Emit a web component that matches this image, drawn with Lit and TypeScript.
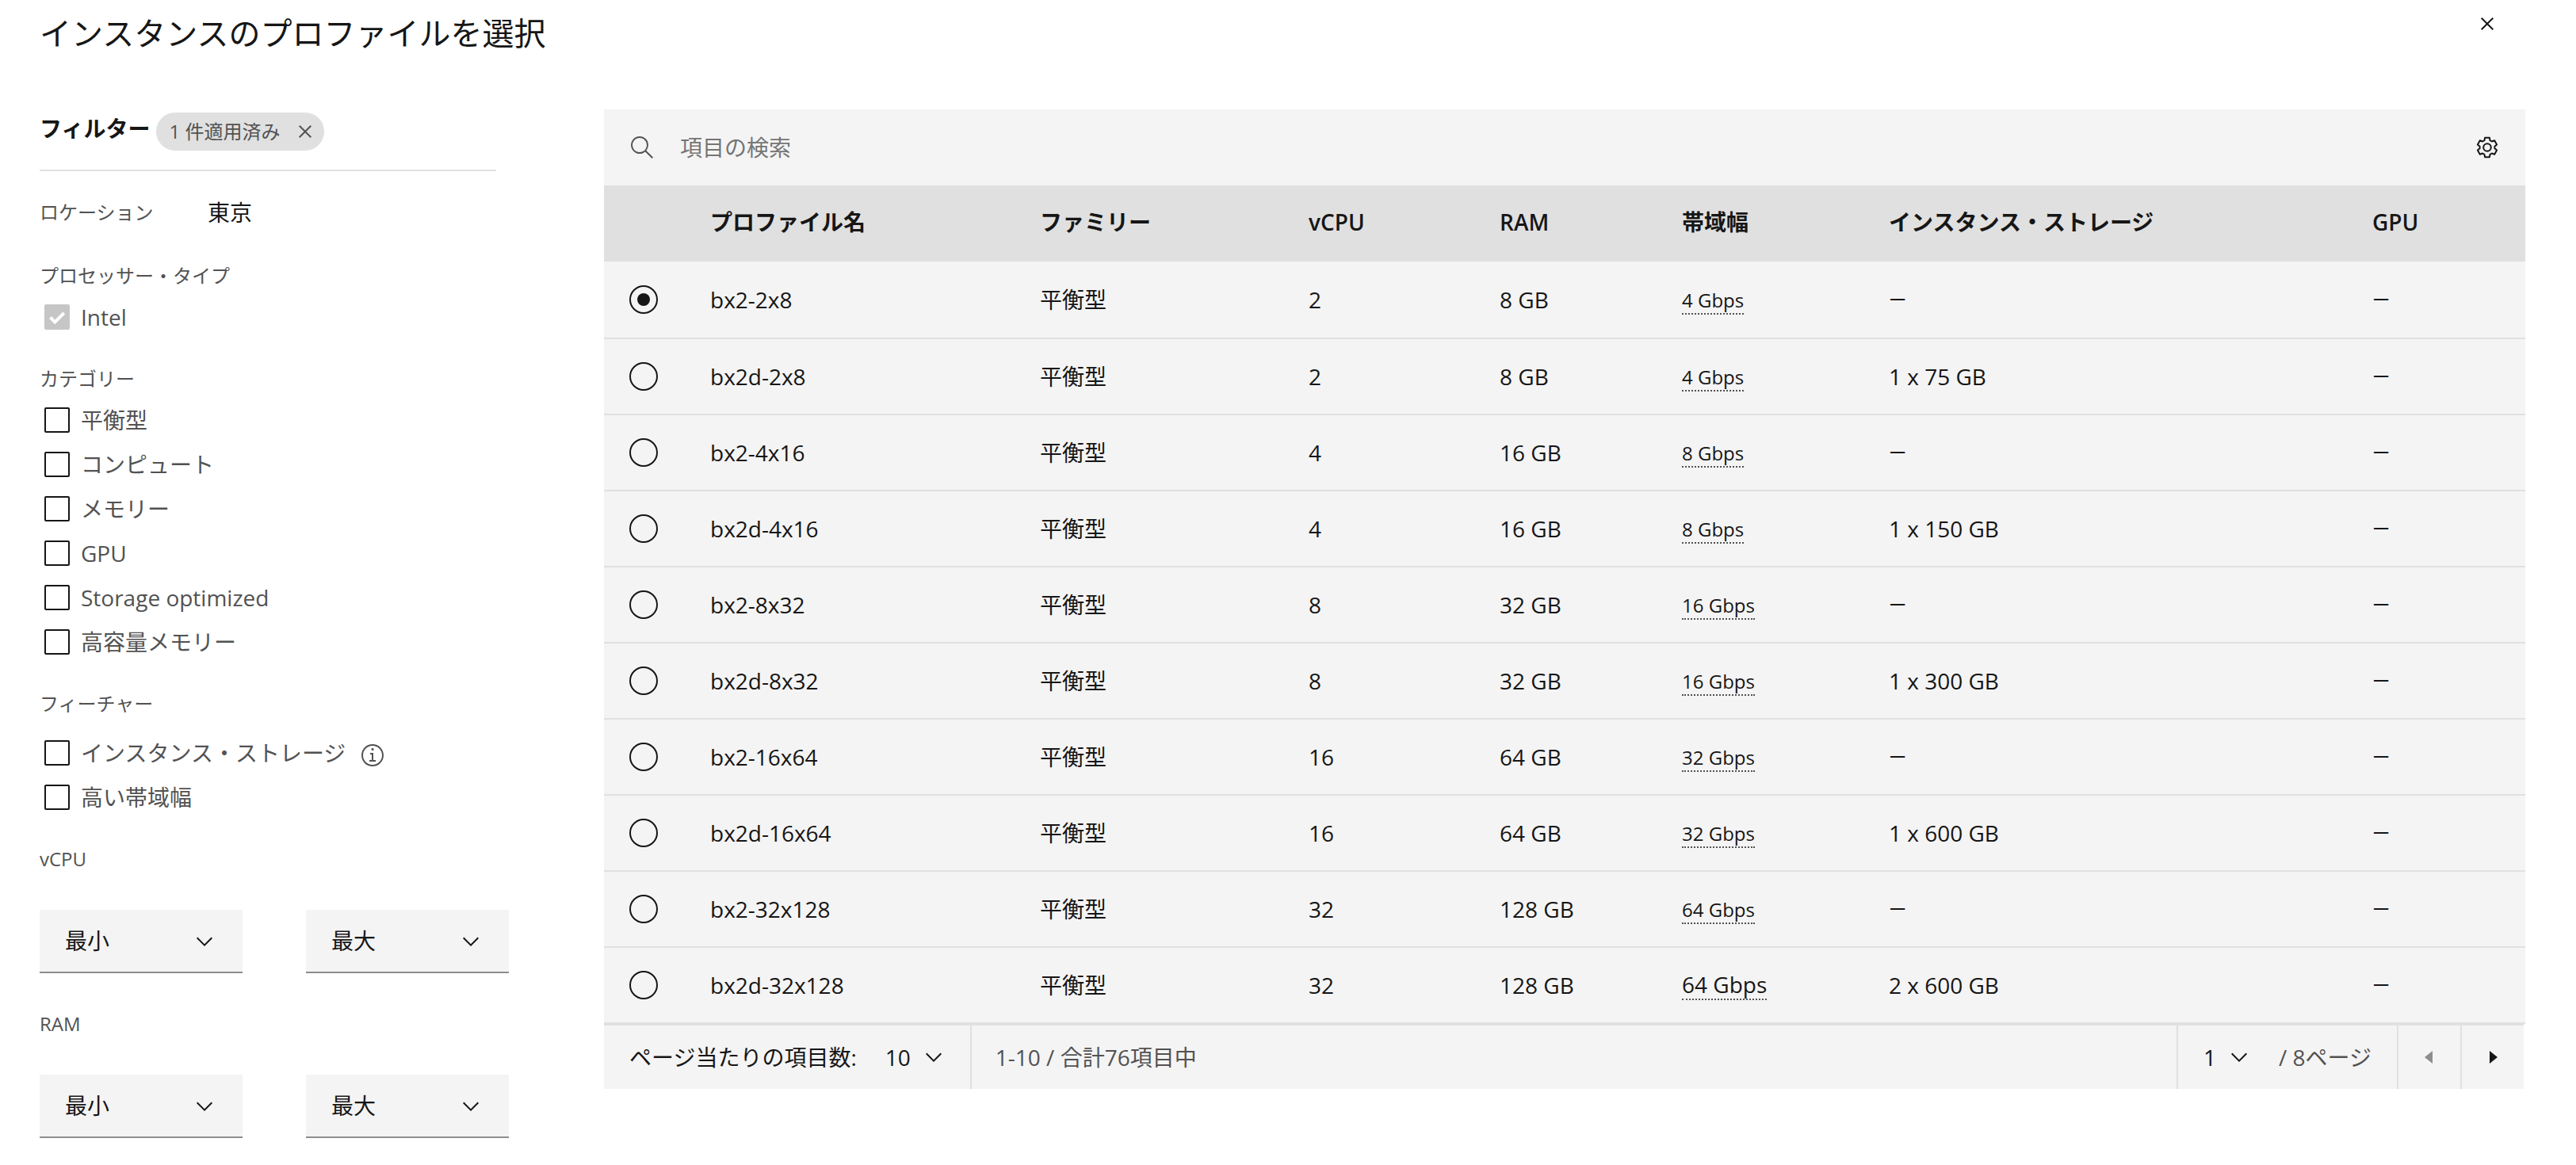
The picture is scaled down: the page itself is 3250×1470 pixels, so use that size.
import { LitElement, html, css, svg, nothing } from "lit";
import { customElement, property, state } from "lit/decorators.js";

type Profile = {
  name: string;
  family: string;
  vcpu: number;
  ram: string;
  bandwidth: string;
  storage: string | null;
  gpu: string | null;
};

const profile = (
  name: string,
  vcpu: number,
  ram: string,
  bandwidth: string,
  storage: string | null = null
): Profile => ({ name, family: "平衡型", vcpu, ram, bandwidth, storage, gpu: null });

const PROFILES: Profile[] = [
  profile("bx2-2x8", 2, "8 GB", "4 Gbps"),
  profile("bx2d-2x8", 2, "8 GB", "4 Gbps", "1 x 75 GB"),
  profile("bx2-4x16", 4, "16 GB", "8 Gbps"),
  profile("bx2d-4x16", 4, "16 GB", "8 Gbps", "1 x 150 GB"),
  profile("bx2-8x32", 8, "32 GB", "16 Gbps"),
  profile("bx2d-8x32", 8, "32 GB", "16 Gbps", "1 x 300 GB"),
  profile("bx2-16x64", 16, "64 GB", "32 Gbps"),
  profile("bx2d-16x64", 16, "64 GB", "32 Gbps", "1 x 600 GB"),
  profile("bx2-32x128", 32, "128 GB", "64 Gbps"),
  profile("bx2d-32x128", 32, "128 GB", "64 Gbps", "2 x 600 GB"),
];

const COLUMNS = ["プロファイル名", "ファミリー", "vCPU", "RAM", "帯域幅", "インスタンス・ストレージ", "GPU"];

const ICONS = {
  close: svg`<path d="M12 4.7 11.3 4 8 7.3 4.7 4 4 4.7 7.3 8 4 11.3 4.7 12 8 8.7 11.3 12 12 11.3 8.7 8z"/>`,
  search: svg`<path d="M15 14.3 10.7 10c1.9-2.3 1.6-5.8-.7-7.7S4.2.7 2.3 3 .7 8.8 3 10.7c2 1.7 5 1.7 7 0l4.3 4.3.7-.7zM2 6.5C2 4 4 2 6.5 2S11 4 11 6.5 9 11 6.5 11 2 9 2 6.5z"/>`,
  settings: svg`<g transform="translate(8 8) scale(.5)" fill="none" stroke="currentColor" stroke-width="2" stroke-linejoin="round"><path d="M-2.9-12.3H2.9L3.6-8.8 5.9-7.5 9.2-8.7 12.1-3.6 9.4-1.3V1.3L12.1 3.6 9.2 8.7 5.9 7.5 3.6 8.8 2.9 12.3H-2.9L-3.6 8.8-5.9 7.5-9.2 8.7-12.1 3.6-9.4 1.3V-1.3L-12.1-3.6-9.2-8.7-5.9-7.5-3.6-8.8Z"/><circle r="4.8"/></g>`,
  chevron: svg`<path d="M8 11 3 6l.7-.7L8 9.6l4.3-4.3.7.7z"/>`,
  caretLeft: svg`<path d="M10 12 5 8l5-4z"/>`,
  caretRight: svg`<path d="M6 4l5 4-5 4z"/>`,
  info: svg`<path d="M8.5 11V6.5h-2v1h1V11H6v1h4v-1zM8 3.5c-.4 0-.8.3-.8.8S7.6 5 8 5s.8-.3.8-.8-.4-.7-.8-.7z"/><path d="M8 15c-3.9 0-7-3.1-7-7s3.1-7 7-7 7 3.1 7 7-3.1 7-7 7zM8 2C4.7 2 2 4.7 2 8s2.7 6 6 6 6-2.7 6-6-2.7-6-6-6z"/>`,
};

const icon = (name: keyof typeof ICONS) =>
  html`<svg class="icon" viewBox="0 0 16 16" aria-hidden="true">${ICONS[name]}</svg>`;

const base = css`
  *,
  *::before,
  *::after {
    box-sizing: border-box;
  }
  button,
  input,
  select {
    margin: 0;
    padding: 0;
    border: 0;
    border-radius: 0;
    background: none;
    color: inherit;
    font: inherit;
    appearance: none;
  }
  button,
  select {
    cursor: pointer;
  }
  .icon {
    display: block;
    flex: none;
    width: 32px;
    height: 32px;
    fill: currentColor;
  }
`;

@customElement("filter-checkbox")
export class FilterCheckbox extends LitElement {
  @property() label = "";
  @property({ type: Boolean }) checked = false;
  @property({ type: Boolean }) disabled = false;
  @property({ type: Boolean }) info = false;

  static styles = [
    base,
    css`
      :host {
        display: flex;
        align-items: center;
        height: 56px;
        padding-left: 6px;
        color: #525252;
      }
      .option {
        display: flex;
        align-items: center;
        gap: 14px;
      }
      .mark {
        display: grid;
      }
      .box,
      .tick {
        grid-area: 1 / 1;
        width: 32px;
        height: 32px;
      }
      .box {
        border: 2px solid #161616;
        border-radius: 2px;
      }
      .box:checked {
        background: #161616;
      }
      .box:disabled {
        border-color: #c6c6c6;
        background: #c6c6c6;
      }
      .tick {
        fill: none;
        stroke: #ffffff;
        stroke-width: 4;
        pointer-events: none;
      }
      .info {
        margin: 6px 0 0 18px;
      }
    `,
  ];

  render() {
    return html`
      <label class="option">
        <span class="mark">
          <input
            class="box"
            type="checkbox"
            .checked=${this.checked}
            ?disabled=${this.disabled}
            @change=${(e: Event) => (this.checked = (e.target as HTMLInputElement).checked)}
          />
          ${this.checked
            ? html`<svg class="tick" viewBox="0 0 32 32" aria-hidden="true"><path d="M7.5 16.5l5.8 5.8L24.8 10.8" /></svg>`
            : nothing}
        </span>
        <span>${this.label}</span>
      </label>
      ${this.info ? html`<button class="info" type="button" aria-label="詳細">${icon("info")}</button>` : nothing}
    `;
  }
}

@customElement("range-select")
export class RangeSelect extends LitElement {
  @property() label = "";
  @property() placeholder = "";

  static styles = [
    base,
    css`
      :host {
        display: grid;
        align-items: center;
        color: #161616;
      }
      .field,
      .icon {
        grid-area: 1 / 1;
      }
      .field {
        width: 100%;
        height: 80px;
        padding: 0 80px 0 32px;
        border-bottom: 2px solid #8d8d8d;
        background: #f4f4f4;
      }
      .icon {
        justify-self: end;
        margin-right: 32px;
        pointer-events: none;
      }
    `,
  ];

  render() {
    return html`
      <select class="field" aria-label=${this.label}>
        <option>${this.placeholder}</option>
      </select>
      ${icon("chevron")}
    `;
  }
}

@customElement("filter-panel")
export class FilterPanel extends LitElement {
  static styles = [
    base,
    css`
      :host {
        display: block;
        color: #525252;
      }
      .head {
        display: flex;
        align-items: center;
        gap: 8px;
        margin-right: 16px;
        padding: 4px 0 24px;
        border-bottom: 2px solid #e0e0e0;
      }
      .heading {
        margin: 0;
        padding-bottom: 8px;
        color: #161616;
        font-size: 28px;
        line-height: 36px;
        font-weight: 600;
      }
      .tag {
        display: flex;
        align-items: center;
        gap: 16px;
        height: 48px;
        padding: 0 8px 0 16px;
        border-radius: 24px;
        background: #e0e0e0;
        font-size: 24px;
      }
      .location {
        display: grid;
        grid-template-columns: 212px 1fr;
        align-items: center;
        margin: 32px 0 44px;
        line-height: 40px;
      }
      .place {
        color: #161616;
      }
      .title {
        font-size: 24px;
        line-height: 32px;
      }
      .group {
        display: grid;
        margin: 0 0 34px;
        padding: 0;
        border: 0;
      }
      .group .title {
        margin-bottom: 8px;
        padding: 0;
      }
      .group.features .title {
        margin-bottom: 18px;
      }
      .range {
        display: grid;
        grid-template-columns: 1fr 1fr;
        gap: 48px 80px;
        margin-bottom: 48px;
      }
      .range .title {
        grid-column: 1 / -1;
      }
    `,
  ];

  render() {
    const categories = ["平衡型", "コンピュート", "メモリー", "GPU", "Storage optimized", "高容量メモリー"];
    return html`
      <div class="head">
        <h2 class="heading">フィルター</h2>
        <span class="tag">
          1 件適用済み
          <button type="button" aria-label="フィルターをクリア">${icon("close")}</button>
        </span>
      </div>
      <div class="location"><span class="title">ロケーション</span><span class="place">東京</span></div>
      <fieldset class="group">
        <legend class="title">プロセッサー・タイプ</legend>
        <filter-checkbox label="Intel" checked disabled></filter-checkbox>
      </fieldset>
      <fieldset class="group">
        <legend class="title">カテゴリー</legend>
        ${categories.map((c) => html`<filter-checkbox label=${c}></filter-checkbox>`)}
      </fieldset>
      <fieldset class="group features">
        <legend class="title">フィーチャー</legend>
        <filter-checkbox label="インスタンス・ストレージ" info></filter-checkbox>
        <filter-checkbox label="高い帯域幅"></filter-checkbox>
      </fieldset>
      ${["vCPU", "RAM"].map(
        (r) => html`
          <div class="range" role="group" aria-label=${r}>
            <span class="title">${r}</span>
            <range-select label="${r} 最小" placeholder="最小"></range-select>
            <range-select label="${r} 最大" placeholder="最大"></range-select>
          </div>
        `
      )}
    `;
  }
}

@customElement("profile-table")
export class ProfileTable extends LitElement {
  @state() private selected = 0;

  static styles = [
    base,
    css`
      :host {
        display: block;
        color: #161616;
      }
      .toolbar {
        display: flex;
        align-items: center;
        height: 96px;
        padding: 0 32px;
        background: #f4f4f4;
      }
      .search {
        display: flex;
        flex: 1;
        align-items: center;
        gap: 32px;
        color: #525252;
      }
      .query {
        flex: 1;
        outline: none;
      }
      .query::placeholder {
        color: #757575;
        opacity: 1;
      }
      .table {
        width: 100%;
        border-spacing: 0;
        table-layout: fixed;
        background: #f4f4f4;
      }
      .c0 { width: 102px; }
      .c1 { width: 416px; }
      .c2 { width: 339px; }
      .c3 { width: 241px; }
      .c4 { width: 230px; }
      .c5 { width: 261px; }
      .c6 { width: 610px; }
      .c7 { width: 225px; }
      .th {
        height: 96px;
        padding: 0 0 4px 32px;
        background: #e0e0e0;
        font-weight: 600;
        text-align: left;
      }
      .td {
        height: 96px;
        padding: 0 0 0 32px;
        border-bottom: 2px solid #e0e0e0;
      }
      .row:first-child .td {
        height: 98px;
      }
      .radio {
        display: grid;
        place-items: center;
        width: 36px;
        height: 36px;
        border: 2px solid #161616;
        border-radius: 50%;
      }
      .radio:checked::before {
        width: 16px;
        height: 16px;
        border-radius: 50%;
        background: #161616;
        content: "";
      }
      .none {
        font-family: Roboto, sans-serif;
      }
      .speed {
        display: inline-block;
        border-bottom: 2px dotted #525252;
        font-size: 24px;
        line-height: 32px;
      }
      .row:last-child .speed {
        font-size: 28px;
        line-height: 36px;
      }
      .pager {
        display: flex;
        margin-right: 2px;
        border-top: 2px solid #e0e0e0;
        background: #f4f4f4;
        line-height: 80px;
      }
      .size,
      .page {
        display: flex;
        align-items: center;
      }
      .size {
        padding: 0 30px 0 32px;
        border-right: 2px solid #e0e0e0;
      }
      .range {
        flex: 1;
        padding-left: 30px;
        color: #525252;
      }
      .page {
        padding: 0 32px;
        border-left: 2px solid #e0e0e0;
        color: #525252;
      }
      .pick {
        display: grid;
        align-items: center;
        color: #161616;
      }
      .pick > * {
        grid-area: 1 / 1;
      }
      .pick .icon {
        justify-self: end;
        pointer-events: none;
      }
      .pick .field {
        height: 80px;
        padding-right: 44px;
      }
      .size .pick {
        margin-left: 36px;
      }
      .page .pick {
        margin-right: 34px;
      }
      .step {
        display: grid;
        place-items: center;
        width: 80px;
        border-left: 2px solid #e0e0e0;
      }
      .step:disabled {
        color: #8d8d8d;
        cursor: default;
      }
    `,
  ];

  private optional(value: string | null) {
    return value ?? html`<span class="none">—</span>`;
  }

  render() {
    return html`
      <div class="toolbar">
        <label class="search">
          ${icon("search")}
          <input class="query" type="text" placeholder="項目の検索" aria-label="項目の検索" />
        </label>
        <button type="button" aria-label="設定">${icon("settings")}</button>
      </div>
      <table class="table">
        <colgroup>
          ${[0, 1, 2, 3, 4, 5, 6, 7].map((i) => html`<col class="c${i}" />`)}
        </colgroup>
        <thead>
          <tr>
            <td class="th"></td>
            ${COLUMNS.map((c) => html`<th class="th" scope="col">${c}</th>`)}
          </tr>
        </thead>
        <tbody>
          ${PROFILES.map(
            (p, i) => html`
              <tr class="row">
                <td class="td">
                  <input
                    class="radio"
                    type="radio"
                    name="profile"
                    aria-label=${p.name}
                    .checked=${i === this.selected}
                    @change=${() => (this.selected = i)}
                  />
                </td>
                <td class="td">${p.name}</td>
                <td class="td">${p.family}</td>
                <td class="td">${p.vcpu}</td>
                <td class="td">${p.ram}</td>
                <td class="td"><span class="speed">${p.bandwidth}</span></td>
                <td class="td">${this.optional(p.storage)}</td>
                <td class="td">${this.optional(p.gpu)}</td>
              </tr>
            `
          )}
        </tbody>
      </table>
      <div class="pager">
        <div class="size">
          <label for="size">ページ当たりの項目数:</label>
          <span class="pick">
            <select id="size" class="field"><option>10</option></select>
            ${icon("chevron")}
          </span>
        </div>
        <span class="range">1-10 / 合計76項目中</span>
        <div class="page">
          <span class="pick">
            <select class="field" aria-label="ページ"><option>1</option></select>
            ${icon("chevron")}
          </span>
          <span>/ 8ページ</span>
        </div>
        <button class="step" type="button" disabled aria-label="前のページ">${icon("caretLeft")}</button>
        <button class="step" type="button" aria-label="次のページ">${icon("caretRight")}</button>
      </div>
    `;
  }
}

@customElement("app-root")
export class AppRoot extends LitElement {
  static styles = [
    base,
    css`
      :host {
        display: block;
        background: #ffffff;
        color: #161616;
        font-family: "Open Sans", "Noto Sans CJK JP", sans-serif;
        font-size: 28px;
        line-height: 36px;
      }
      .header {
        display: flex;
        align-items: flex-start;
        justify-content: space-between;
        padding: 14px 96px 68px 50px;
      }
      .title {
        margin: 0;
        font-size: 40px;
        line-height: 56px;
        font-weight: 400;
      }
      .body {
        display: grid;
        grid-template-columns: 592px minmax(0, 1fr);
        align-items: start;
        gap: 120px;
        padding: 0 64px 0 50px;
      }
    `,
  ];

  render() {
    return html`
      <header class="header">
        <h1 class="title">インスタンスのプロファイルを選択</h1>
        <button type="button" aria-label="閉じる">${icon("close")}</button>
      </header>
      <main class="body">
        <filter-panel></filter-panel>
        <profile-table></profile-table>
      </main>
    `;
  }
}
